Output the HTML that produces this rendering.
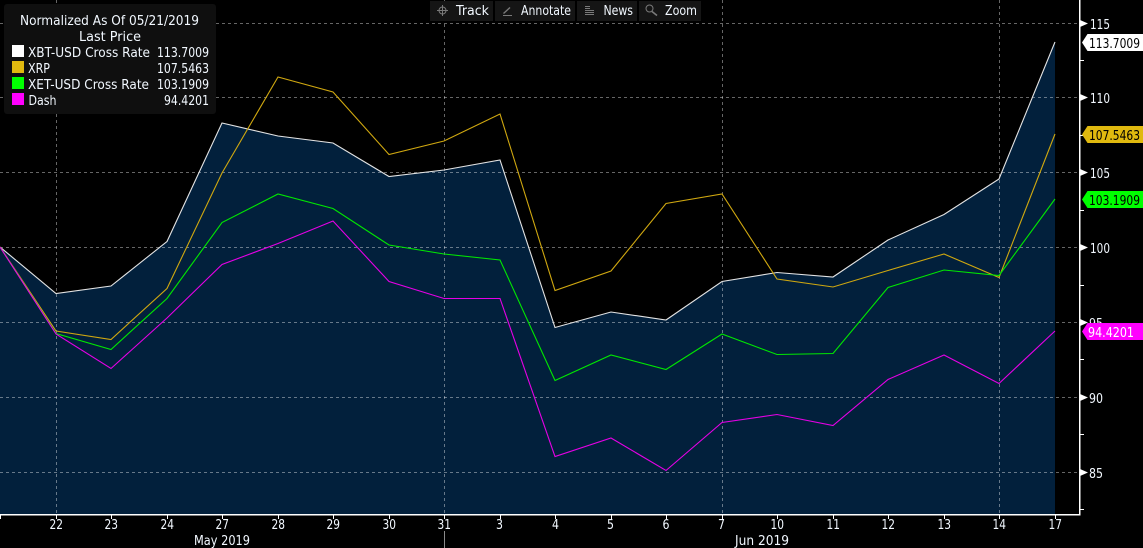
<!DOCTYPE html>
<html><head><meta charset="utf-8"><style>
html,body{margin:0;padding:0;background:#000;width:1143px;height:548px;overflow:hidden}
svg{display:block}
text{font-family:"DejaVu Sans","Liberation Sans",sans-serif;font-size:13px;fill:#f2f8ff}
.c{shape-rendering:crispEdges}
</style></head><body>
<svg width="1143" height="548" viewBox="0 0 1143 548" xmlns="http://www.w3.org/2000/svg">
<rect width="1143" height="548" fill="#000"/>
<!-- area -->
<polygon fill="#02203c" points="0,247 56,293.5 111,286 167,241.5 222,123 278,136 333,143 389,176.5 444,170 500,160 555,327.5 611,312 666,320 722,281.5 777,272.5 833,277 888,240 944,214.5 999,179 1055,42 1055,514 0,514"/>
<!-- grid -->
<g class="c" stroke="#fff" stroke-opacity=".4" stroke-width="1" stroke-dasharray="3 3" fill="none">
<path d="M0 23.5H1079M0 97.5H1079M0 172.5H1079M0 247.5H1079M0 322.5H1079M0 397.5H1079M0 472.5H1079"/>
<path d="M56.5 0V514M444.5 0V514M722.5 0V514M999.5 0V514"/>
</g>
<!-- series -->
<g fill="none" stroke-width="1.1" stroke-linejoin="miter">
<polyline stroke="#e4e4e4" points="0,247 56,293.5 111,286 167,241.5 222,123 278,136 333,143 389,176.5 444,170 500,160 555,327.5 611,312 666,320 722,281.5 777,272.5 833,277 888,240 944,214.5 999,179 1055,42"/>
<polyline stroke="#d0a810" points="0,247 56,331 111,339.5 167,288.5 222,173 278,77 333,92 389,154.5 444,141 500,114 555,290.5 611,271 666,203.5 722,194 777,279 833,287 888,270.5 944,254 999,277.5 1055,134"/>
<polyline stroke="#00e800" points="0,247 56,333.5 111,349.5 167,298.5 222,222.5 278,194 333,208.5 389,245 444,254 500,260 555,380.5 611,355 666,369.5 722,334 777,354.5 833,353.5 888,287.5 944,270 999,275.5 1055,199"/>
<polyline stroke="#e600e6" points="0,247 56,334 111,368.5 167,318 222,264.5 278,243.5 333,221 389,281.5 444,298.5 500,298.5 555,456.5 611,438 666,470.5 722,422.5 777,414.5 833,425.5 888,379.5 944,355 999,383.5 1055,331"/>
</g>
<!-- axes -->
<g class="c" fill="#fff">
<rect x="0" y="514" width="1080.5" height="1.5"/>
<rect x="1079" y="0" width="1.5" height="515.5"/>
<path d="M0 515h1v4H0zM56 515h1v4h-1zM111 515h1v4h-1zM167 515h1v4h-1zM222 515h1v4h-1zM278 515h1v4h-1zM333 515h1v4h-1zM389 515h1v4h-1zM444 515h1v4h-1zM500 515h1v4h-1zM555 515h1v4h-1zM611 515h1v4h-1zM666 515h1v4h-1zM722 515h1v4h-1zM777 515h1v4h-1zM833 515h1v4h-1zM888 515h1v4h-1zM944 515h1v4h-1zM999 515h1v4h-1zM1055 515h1v4h-1z"/>
<path d="M1080 60h4v1h-4zM1080 135h4v1h-4zM1080 210h4v1h-4zM1080 285h4v1h-4zM1080 359h4v1h-4zM1080 434h4v1h-4zM1080 509h4v1h-4z"/>
</g>
<rect class="c" x="444" y="531" width="1" height="17" fill="#8a8a8a"/>
<g fill="#fff">
<polygon points="1080,20 1088,23.5 1080,27"/>
<polygon points="1080,94 1088,97.5 1080,101"/>
<polygon points="1080,169 1088,172.5 1080,176"/>
<polygon points="1080,244 1088,247.5 1080,251"/>
<polygon points="1080,319 1088,322.5 1080,326"/>
<polygon points="1080,394 1088,397.5 1080,401"/>
<polygon points="1080,469 1088,472.5 1080,476"/>
</g>
<!-- y labels -->
<text x="1090" y="29" textLength="20" lengthAdjust="spacingAndGlyphs">115</text>
<text x="1090" y="103" textLength="20" lengthAdjust="spacingAndGlyphs">110</text>
<text x="1090" y="178" textLength="20" lengthAdjust="spacingAndGlyphs">105</text>
<text x="1090" y="253" textLength="20" lengthAdjust="spacingAndGlyphs">100</text>
<text x="1089" y="328" textLength="14" lengthAdjust="spacingAndGlyphs">95</text>
<text x="1089" y="403" textLength="14" lengthAdjust="spacingAndGlyphs">90</text>
<text x="1089" y="478" textLength="14" lengthAdjust="spacingAndGlyphs">85</text>
<!-- tags -->
<polygon fill="#fff" points="1082,42.5 1087.5,34 1143,34 1143,51 1087.5,51"/>
<text x="1089" y="48" textLength="51" lengthAdjust="spacingAndGlyphs" style="fill:#000">113.7009</text>
<polygon fill="#e0b90f" points="1082,134.5 1087.5,126 1143,126 1143,143 1087.5,143"/>
<text x="1089" y="140" textLength="51" lengthAdjust="spacingAndGlyphs" style="fill:#000">107.5463</text>
<polygon fill="#00ff00" points="1082,199.5 1087.5,191 1143,191 1143,208 1087.5,208"/>
<text x="1089" y="205" textLength="51" lengthAdjust="spacingAndGlyphs" style="fill:#000">103.1909</text>
<polygon fill="#ff00ff" points="1082,331.5 1087.5,323 1143,323 1143,340 1087.5,340"/>
<text x="1088" y="337" textLength="46" lengthAdjust="spacingAndGlyphs" style="fill:#fff">94.4201</text>
<!-- x labels -->
<g lengthAdjust="spacingAndGlyphs">
<text x="49.5" y="529" textLength="13.5" lengthAdjust="spacingAndGlyphs">22</text><text x="104.5" y="529" textLength="13.5" lengthAdjust="spacingAndGlyphs">23</text><text x="160.5" y="529" textLength="13.5" lengthAdjust="spacingAndGlyphs">24</text><text x="215.5" y="529" textLength="13.5" lengthAdjust="spacingAndGlyphs">27</text><text x="271.5" y="529" textLength="13.5" lengthAdjust="spacingAndGlyphs">28</text><text x="326.5" y="529" textLength="13.5" lengthAdjust="spacingAndGlyphs">29</text><text x="382.5" y="529" textLength="13.5" lengthAdjust="spacingAndGlyphs">30</text><text x="437.5" y="529" textLength="13.5" lengthAdjust="spacingAndGlyphs">31</text><text x="496" y="529" textLength="7" lengthAdjust="spacingAndGlyphs">3</text><text x="552" y="529" textLength="7" lengthAdjust="spacingAndGlyphs">4</text><text x="607" y="529" textLength="7" lengthAdjust="spacingAndGlyphs">5</text><text x="662.5" y="529" textLength="7" lengthAdjust="spacingAndGlyphs">6</text><text x="718" y="529" textLength="7" lengthAdjust="spacingAndGlyphs">7</text><text x="770.5" y="529" textLength="13.5" lengthAdjust="spacingAndGlyphs">10</text><text x="826.5" y="529" textLength="13.5" lengthAdjust="spacingAndGlyphs">11</text><text x="881.5" y="529" textLength="13.5" lengthAdjust="spacingAndGlyphs">12</text><text x="937.5" y="529" textLength="13.5" lengthAdjust="spacingAndGlyphs">13</text><text x="992.5" y="529" textLength="13.5" lengthAdjust="spacingAndGlyphs">14</text><text x="1048.5" y="529" textLength="13.5" lengthAdjust="spacingAndGlyphs">17</text>
</g>
<text x="194" y="545" textLength="56" lengthAdjust="spacingAndGlyphs">May 2019</text>
<text x="735" y="545" textLength="54" lengthAdjust="spacingAndGlyphs">Jun 2019</text>
<!-- legend -->
<rect x="4" y="4" width="212" height="110" rx="3" fill="#0f0f0f"/>
<text x="20" y="25" textLength="179" lengthAdjust="spacingAndGlyphs">Normalized As Of 05/21/2019</text>
<text x="79" y="41" textLength="62" lengthAdjust="spacingAndGlyphs">Last Price</text>
<g class="c">
<rect x="12" y="45" width="12" height="12" fill="#fff"/>
<rect x="12" y="61" width="12" height="12" fill="#e0b90f"/>
<rect x="12" y="77" width="12" height="12" fill="#00ff00"/>
<rect x="12" y="93" width="12" height="12" fill="#ff00ff"/>
</g>
<text x="28" y="57" textLength="122" lengthAdjust="spacingAndGlyphs">XBT-USD Cross Rate</text>
<text x="157" y="57" textLength="52" lengthAdjust="spacingAndGlyphs">113.7009</text>
<text x="28" y="73" textLength="22" lengthAdjust="spacingAndGlyphs">XRP</text>
<text x="157" y="73" textLength="52" lengthAdjust="spacingAndGlyphs">107.5463</text>
<text x="28" y="89" textLength="121" lengthAdjust="spacingAndGlyphs">XET-USD Cross Rate</text>
<text x="157" y="89" textLength="52" lengthAdjust="spacingAndGlyphs">103.1909</text>
<text x="28.5" y="105" textLength="28" lengthAdjust="spacingAndGlyphs">Dash</text>
<text x="164" y="105" textLength="45" lengthAdjust="spacingAndGlyphs">94.4201</text>
<!-- toolbar -->
<g class="c" fill="#151515">
<rect x="430" y="1" width="63" height="20"/>
<rect x="495" y="1" width="80" height="20"/>
<rect x="577" y="1" width="60" height="20"/>
<rect x="639" y="1" width="62" height="20"/>
</g>
<g fill="none" stroke="#7a7a7a" stroke-width="1">
<circle cx="442.5" cy="10.5" r="3.5"/>
<path d="M437 10.5H448M442.5 5V16"/>
<path d="M503.5 13.5L510 7.5" stroke-width="1.4"/>
<path d="M503 15.5H512"/>
<path class="c" d="M585 6.5H590M585 8.5H590M585 10.5H594M585 12.5H594M585 14.5H594"/>
<circle cx="649.5" cy="8.5" r="3.5"/>
<path d="M652 11.5L657 15.5" stroke-width="1.6"/>
</g>
<text x="456" y="15" textLength="33" lengthAdjust="spacingAndGlyphs">Track</text>
<text x="521" y="15" textLength="50" lengthAdjust="spacingAndGlyphs">Annotate</text>
<text x="603.5" y="15" textLength="29.5" lengthAdjust="spacingAndGlyphs">News</text>
<text x="665" y="15" textLength="32" lengthAdjust="spacingAndGlyphs">Zoom</text>
</svg>
</body></html>
